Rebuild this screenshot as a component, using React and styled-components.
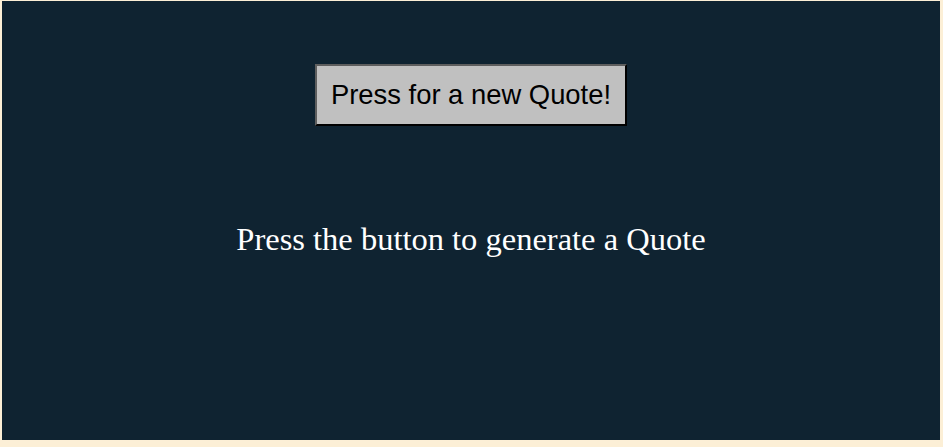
import React, { useState } from 'react';
import styled, { createGlobalStyle } from 'styled-components';

const GlobalStyle = createGlobalStyle`
  body {
    margin: 0;
    background-color: #fcefd6;
    font-family: "Liberation Serif", "Times New Roman", serif;
  }
`;

const Page = styled.div`
  padding: 1px 3px 7px 2px;
`;

const Panel = styled.div`
  height: 439px;
  background-color: #0f2331;
  display: flex;
  flex-direction: column;
  align-items: center;
  padding-top: 63px;
  box-sizing: border-box;
`;

const QuoteButton = styled.button`
  width: 312px;
  height: 62px;
  padding: 0;
  background-color: #c0c0c0;
  border: 2px solid;
  border-color: #5e5e5e #000 #000 #5e5e5e;
  font-family: "Liberation Sans", Arial, sans-serif;
  font-size: 27.4px;
  color: #000;
  cursor: pointer;
`;

const QuoteText = styled.p`
  margin: 95px 0 0;
  color: #fff;
  font-family: "Liberation Serif", "Times New Roman", serif;
  font-size: 32.5px;
  text-align: center;
`;

const quotes = [
  'The only way to do great work is to love what you do.',
  'Stay hungry, stay foolish.',
  'Simplicity is the ultimate sophistication.'
];

export default function App() {
  const [quote, setQuote] = useState(null);

  return (
    <Page>
      <GlobalStyle />
      <Panel>
        <QuoteButton onClick={() => setQuote(quotes[Math.floor(Math.random() * quotes.length)])}>
          Press for a new Quote!
        </QuoteButton>
        <QuoteText>{quote ? quote : 'Press the button to generate a Quote'}</QuoteText>
      </Panel>
    </Page>
  );
}
